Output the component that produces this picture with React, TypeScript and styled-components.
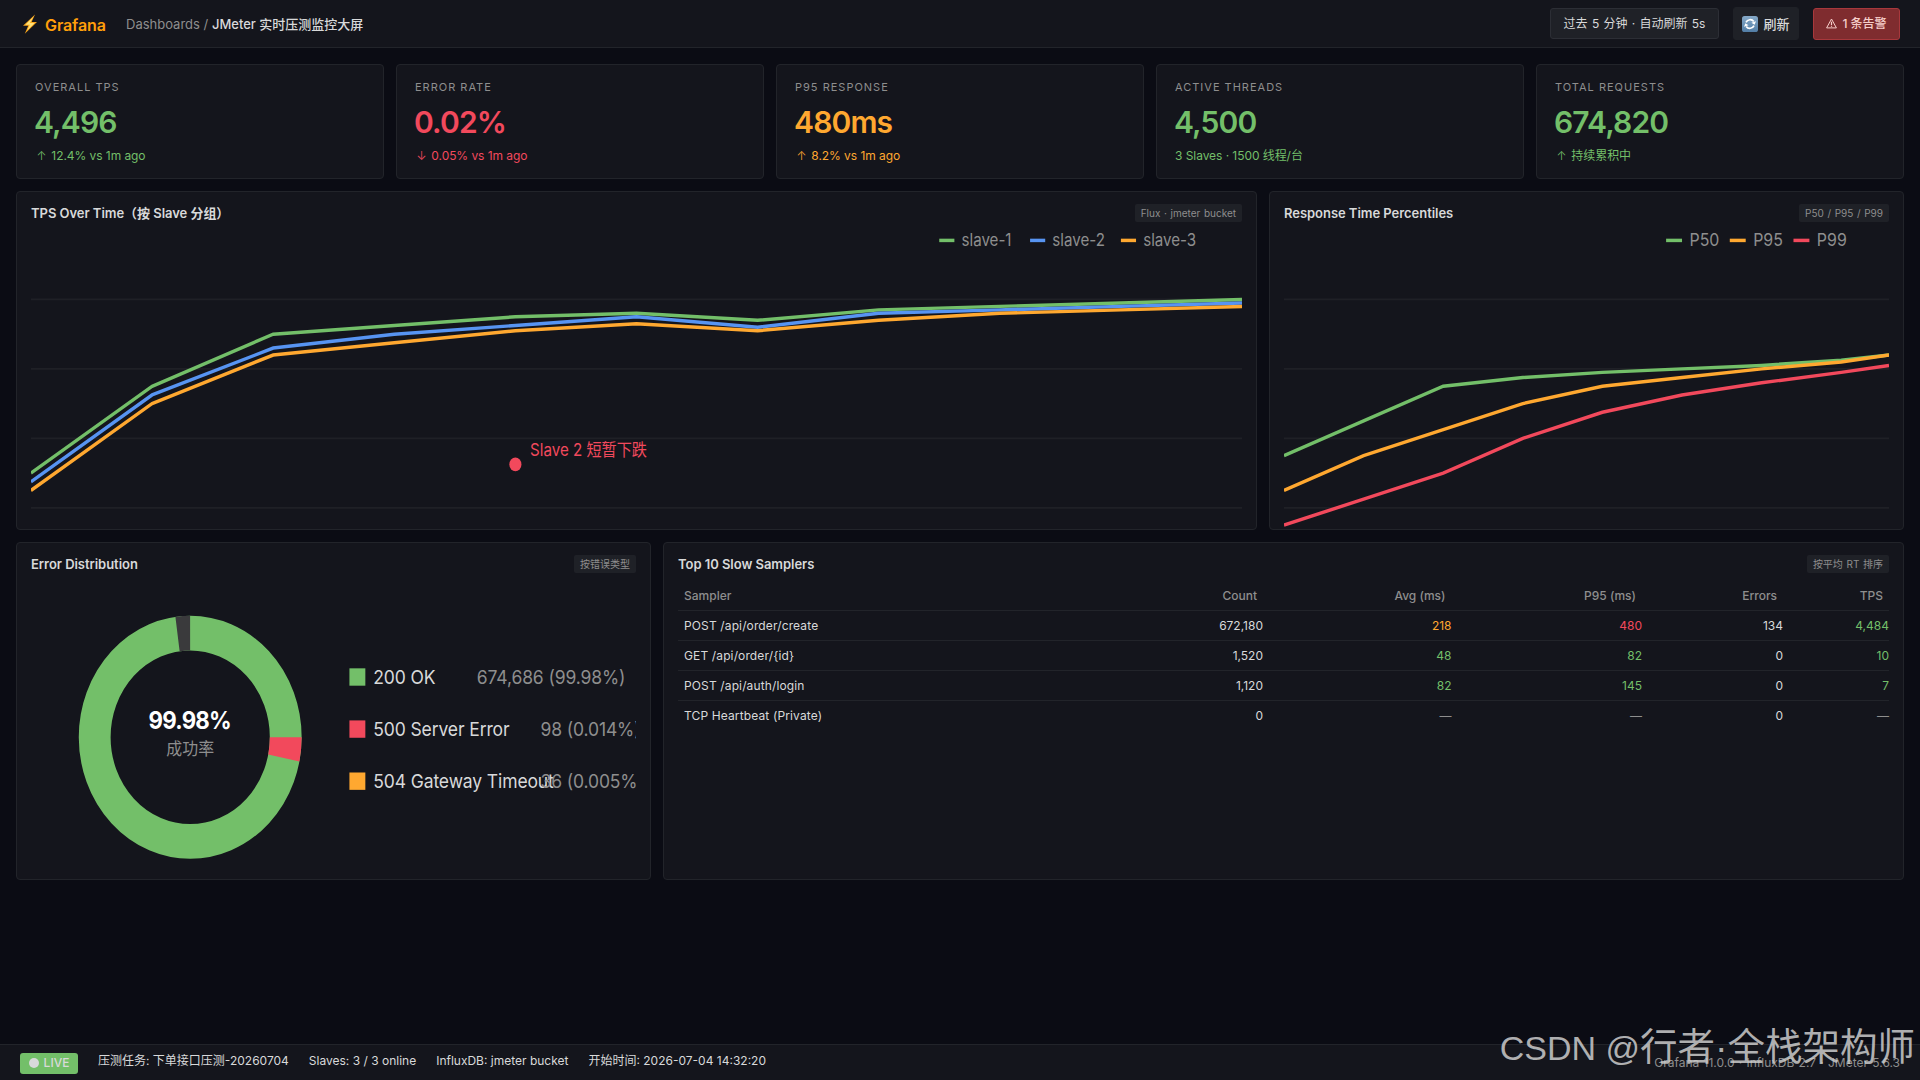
import React from "react";
import styled, { createGlobalStyle } from "styled-components";

const color = {
  page: "#0b0c14",
  panel: "#14151c",
  chip: "#1f2127",
  line: "#22242a",
  grid: "#1f2026",
  text: "#d8d9da",
  muted: "#8e8e8e",
  green: "#73bf69",
  red: "#f2495c",
  orange: "#ffa830",
  blue: "#5794f2",
};

type Tone = "green" | "red" | "orange" | "text" | "muted";

const GlobalStyle = createGlobalStyle`
  * { box-sizing: border-box; }
  body {
    margin: 0;
    background: ${color.page};
    color: ${color.text};
    font-family: Inter, "Noto Sans CJK SC", sans-serif;
    font-size: 12px;
  }
`;

const Screen = styled.div`
  width: 1920px;
  height: 1080px;
  display: flex;
  flex-direction: column;
  overflow: hidden;
  position: relative;
`;

const Header = styled.header`
  height: 48px;
  flex: none;
  display: flex;
  align-items: center;
  padding: 0 20px;
  background: ${color.panel};
  border-bottom: 1px solid ${color.line};
`;

const Brand = styled.div`
  display: flex;
  align-items: center;
  gap: 6px;
  width: 106px;
  padding-left: 1px;
  color: #ff9f0a;
  font-size: 16px;
  font-weight: 600;
  line-height: 20px;
  padding-top: 2px;
  letter-spacing: -0.1px;
  svg { margin-top: -2px; }
`;

const Crumbs = styled.div`
  color: ${color.muted};
  font-size: 13px;
  line-height: 20px;
  b { color: ${color.text}; font-weight: 500; }
`;

const Actions = styled.div`
  margin-left: auto;
  display: flex;
  align-items: center;
  gap: 14px;
`;

const Action = styled.div<{ $w: number; $h: number; $kind?: "outline" | "alert" }>`
  width: ${(p) => p.$w}px;
  height: ${(p) => p.$h}px;
  display: flex;
  align-items: center;
  justify-content: center;
  gap: 5px;
  white-space: nowrap;
  border-radius: 3px;
  line-height: 18px;
  background: ${(p) => (p.$kind === "alert" ? "#7f2c2f" : color.chip)};
  border: 1px solid ${(p) => (p.$kind === "alert" ? "#a8383c" : p.$kind ? "#2c2e35" : color.chip)};
  color: ${(p) => (p.$kind === "alert" ? "#f6cfcb" : color.text)};
  font-size: ${(p) => (p.$kind ? 12 : 13)}px;
  font-weight: ${(p) => (p.$kind === "outline" ? 400 : 500)};
  word-spacing: ${(p) => (p.$kind === "outline" ? 0.9 : 0)}px;
`;

const Main = styled.main`
  flex: 1;
  padding: 16px;
  display: grid;
  grid-template-rows: 115px 338.5px 338.5px;
  gap: 12px;
`;

const KpiRow = styled.section`
  display: grid;
  grid-template-columns: repeat(5, 1fr);
  gap: 12px;
`;

const PanelRow = styled.section<{ $columns: string }>`
  display: grid;
  grid-template-columns: ${(p) => p.$columns};
  gap: 12px;
  min-height: 0;
`;

const Card = styled.article`
  background: ${color.panel};
  border: 1px solid ${color.line};
  border-radius: 4px;
  overflow: hidden;
  min-width: 0;
`;

const KpiCard = styled(Card)`
  padding: 14px 18px;
  display: flex;
  flex-direction: column;
`;

const KpiLabel = styled.div`
  color: ${color.muted};
  font-size: 11px;
  line-height: 16px;
  letter-spacing: 1px;
  white-space: nowrap;
`;

const KpiValue = styled.div<{ $tone: Tone }>`
  color: ${(p) => color[p.$tone]};
  font-size: 30px;
  font-weight: 600;
  line-height: 36px;
  letter-spacing: -0.85px;
  margin: 9px 0 0 -1px;
`;

const KpiNote = styled.div<{ $tone: Tone }>`
  color: ${(p) => color[p.$tone]};
  font-size: 12px;
  line-height: 18px;
  letter-spacing: -0.06px;
  margin-top: 7px;
`;

const Arrow = styled.span`
  display: inline-block;
  width: 13px;
  text-align: center;
  font-weight: 300;
`;

const Panel = styled(Card)`
  padding: 12px 14px;
`;

const PanelHead = styled.div`
  display: flex;
  justify-content: space-between;
  align-items: center;
  height: 18px;
  margin-bottom: 8px;
`;

const PanelTitle = styled.h2`
  margin: 0;
  font-size: 13px;
  font-weight: 600;
  line-height: 18px;
  letter-spacing: -0.04px;
`;

const Tag = styled.span`
  height: 18px;
  padding: 0 6px;
  border-radius: 2px;
  background: ${color.chip};
  color: ${color.muted};
  font-size: 10px;
  line-height: 18px;
  word-spacing: 0.8px;
  white-space: nowrap;
`;

const Chart = styled.svg`
  display: block;
  width: 100%;
  height: 100%;
  overflow: hidden;
`;

const SamplerTable = styled.div`
  display: flex;
  flex-direction: column;
`;

const SamplerRow = styled.div<{ $head?: boolean }>`
  display: grid;
  grid-template-columns: 585px 188.5px 190.5px 141px 1fr;
  height: 30px;
  padding-top: 2px;
  align-items: center;
  border-bottom: 1px solid ${color.line};
  color: ${(p) => (p.$head ? color.muted : color.text)};
  font-weight: ${(p) => (p.$head ? 500 : 400)};
  line-height: 18px;
  &:last-child { border-bottom-color: transparent; }
`;

const NameCell = styled.div<{ $head?: boolean }>`
  display: flex;
  justify-content: space-between;
  padding: 0 ${(p) => (p.$head ? 6 : 0)}px 0 6px;
  span:first-child { letter-spacing: ${(p) => (p.$head ? 0 : 0.13)}px; }
`;

const Cell = styled.div<{ $tone?: Tone; $head?: boolean }>`
  text-align: right;
  padding-right: ${(p) => (p.$head ? 6 : 0)}px;
  color: ${(p) => (p.$tone ? color[p.$tone] : "inherit")};
`;

const Footer = styled.footer`
  height: 36px;
  flex: none;
  display: flex;
  align-items: center;
  gap: 20px;
  padding: 0 20px;
  background: ${color.panel};
  border-top: 1px solid ${color.line};
  line-height: 18px;
`;

const Live = styled.div`
  width: 58px;
  height: 21px;
  margin-top: 1px;
  display: flex;
  align-items: center;
  justify-content: center;
  gap: 5px;
  border-radius: 3px;
  background: ${color.green};
  font-weight: 500;
`;

const Dot = styled.i`
  width: 10px;
  height: 10px;
  border-radius: 50%;
  background: ${color.text};
`;

const FooterItem = styled.span`
  margin-top: -4px;
  white-space: nowrap;
`;

const Versions = styled.span`
  margin-left: auto;
  margin-top: 1px;
  color: ${color.muted};
  word-spacing: 0.9px;
  white-space: nowrap;
`;

const Watermark = styled.div`
  position: absolute;
  right: 5px;
  bottom: 8px;
  color: rgba(205, 205, 205, 0.85);
  font-family: "Liberation Sans", "Noto Sans CJK SC", sans-serif;
  font-size: 37.5px;
  font-weight: 400;
  line-height: 48px;
  white-space: nowrap;
  span { font-size: 34px; }
`;

const kpis: { label: string; value: string; arrow?: string; note: string; tone: Tone }[] = [
  { label: "OVERALL TPS", value: "4,496", arrow: "↑", note: "12.4% vs 1m ago", tone: "green" },
  { label: "ERROR RATE", value: "0.02%", arrow: "↓", note: "0.05% vs 1m ago", tone: "red" },
  { label: "P95 RESPONSE", value: "480ms", arrow: "↑", note: "8.2% vs 1m ago", tone: "orange" },
  { label: "ACTIVE THREADS", value: "4,500", note: "3 Slaves · 1500 线程/台", tone: "green" },
  { label: "TOTAL REQUESTS", value: "674,820", arrow: "↑", note: "持续累积中", tone: "green" },
];

const samplers: { name: string; count: string; cells: [string, Tone][] }[] = [
  { name: "POST /api/order/create", count: "672,180", cells: [["218", "orange"], ["480", "red"], ["134", "text"], ["4,484", "green"]] },
  { name: "GET /api/order/{id}", count: "1,520", cells: [["48", "green"], ["82", "green"], ["0", "text"], ["10", "green"]] },
  { name: "POST /api/auth/login", count: "1,120", cells: [["82", "green"], ["145", "green"], ["0", "text"], ["7", "green"]] },
  { name: "TCP Heartbeat (Private)", count: "0", cells: [["—", "muted"], ["—", "muted"], ["0", "text"], ["—", "muted"]] },
];

const tpsX = [0, 80, 160, 240, 320, 400, 480, 560, 640, 720, 800];
const rtX = [0, 50, 100, 150, 200, 250, 300, 350, 380];

const points = (xs: number[], ys: number[]) => xs.map((x, i) => `${x},${ys[i]}`).join(" ");

function Series({ xs, ys, stroke }: { xs: number[]; ys: number[]; stroke: string }) {
  return <polyline points={points(xs, ys)} fill="none" stroke={stroke} strokeWidth={2} />;
}

function GridLines({ width }: { width: number }) {
  return (
    <>
      {[40, 80, 120, 160].map((y) => (
        <line key={y} x1={0} x2={width} y1={y} y2={y} stroke={color.grid} strokeWidth={1} />
      ))}
    </>
  );
}

function Legend({ x, fill, label }: { x: number; fill: string; label: string }) {
  return (
    <>
      <rect x={x} y={5} width={10} height={2} fill={fill} />
      <text x={x + 14.7} y={9} fontSize={10} fill={color.muted}>{label}</text>
    </>
  );
}

function TpsChart() {
  return (
    <Chart viewBox="0 0 800 180" preserveAspectRatio="none">
      <GridLines width={800} />
      <Series xs={tpsX} ys={[140, 90, 60, 55, 50, 48, 52, 46, 44, 42, 40]} stroke={color.green} />
      <Series xs={tpsX} ys={[145, 95, 68, 60, 55, 50, 56, 48, 46, 44, 42]} stroke={color.blue} />
      <Series xs={tpsX} ys={[150, 100, 72, 65, 58, 54, 58, 52, 48, 46, 44]} stroke={color.orange} />
      <circle cx={320} cy={135} r={4} fill={color.red} />
      <text x={329.7} y={130} fontSize={10} fill={color.red}>Slave 2 短暂下跌</text>
      <Legend x={600} fill={color.green} label="slave-1" />
      <Legend x={660} fill={color.blue} label="slave-2" />
      <Legend x={720} fill={color.orange} label="slave-3" />
    </Chart>
  );
}

function PercentileChart() {
  return (
    <Chart viewBox="0 0 380 180" preserveAspectRatio="none">
      <GridLines width={380} />
      <Series xs={rtX} ys={[130, 110, 90, 85, 82, 80, 78, 75, 72]} stroke={color.green} />
      <Series xs={rtX} ys={[150, 130, 115, 100, 90, 85, 80, 76, 72]} stroke={color.orange} />
      <Series xs={rtX} ys={[170, 155, 140, 120, 105, 95, 88, 82, 78]} stroke={color.red} />
      <Legend x={240} fill={color.green} label="P50" />
      <Legend x={280} fill={color.orange} label="P95" />
      <Legend x={320} fill={color.red} label="P99" />
    </Chart>
  );
}

function ErrorChart() {
  const legend = [
    { y: 50.3, fill: color.green, name: "200 OK", value: "674,686 (99.98%)", vx: 280 },
    { y: 80.3, fill: color.red, name: "500 Server Error", value: "98 (0.014%)", vx: 320 },
    { y: 110.3, fill: color.orange, name: "504 Gateway Timeout", value: "36 (0.005%)", vx: 320 },
  ];
  return (
    <Chart viewBox="0 0 380 180" preserveAspectRatio="none">
      <circle cx={100} cy={90} r={60} fill="none" stroke={color.green} strokeWidth={20} />
      <circle cx={100} cy={90} r={60} fill="none" stroke={color.red} strokeWidth={20} strokeDasharray="12 365" />
      <circle cx={100} cy={90} r={60} fill="none" stroke="#3a3a3c" strokeWidth={20} strokeDasharray="8 369" transform="rotate(-97.64 100 90)" />
      <text x={99.7} y={85} fontSize={14} fontWeight={700} fill="#fff" textAnchor="middle" letterSpacing={-0.5}>99.98%</text>
      <text x={100} y={100.5} fontSize={10} fill={color.muted} textAnchor="middle">成功率</text>
      {legend.map((l) => (
        <g key={l.name} fontSize={11} letterSpacing={-0.07}>
          <rect x={200} y={l.y} width={10} height={10} fill={l.fill} />
          <text x={215} y={l.y + 8.9} fill={color.text}>{l.name}</text>
          <text x={l.vx} y={l.y + 8.9} fill={color.muted}>{l.value}</text>
        </g>
      ))}
    </Chart>
  );
}

function BoltIcon() {
  return (
    <svg width="18" height="20" viewBox="0 0 18 20">
      <path d="M14 .4 2 11.8h5.2L3.8 19.8 16 8h-5.4z" fill="#f9a51b" />
      <path d="M12.4 2.8 4.4 10.8h4.4L6 16.8 13.6 9H8.9z" fill="#ffe27a" />
    </svg>
  );
}

function RefreshIcon() {
  return (
    <svg width="16" height="16" viewBox="0 0 16 16">
      <defs>
        <linearGradient id="refresh-tile" x1="0" y1="0" x2="0" y2="1">
          <stop offset="0" stopColor="#86a9c8" />
          <stop offset="1" stopColor="#527ea6" />
        </linearGradient>
      </defs>
      <rect width="16" height="16" rx="2.6" fill="url(#refresh-tile)" />
      <path d="M4 6.4A4.5 4.5 0 0 1 11.8 5.6" fill="none" stroke="#fff" strokeWidth="1.7" />
      <path d="M12 9.6A4.5 4.5 0 0 1 4.2 10.4" fill="none" stroke="#fff" strokeWidth="1.7" />
      <path d="M14 5.2 12.6 8.8 9.4 6.8zM2 10.8 3.4 7.2 6.6 9.2z" fill="#fff" />
    </svg>
  );
}

function WarningIcon() {
  return (
    <svg width="11" height="11" viewBox="0 0 11 11" fill="none" stroke="currentColor" strokeWidth="1">
      <path d="M5.5 1 10.4 9.9H.6z" strokeLinejoin="round" />
      <path d="M5.5 3.8v3.1M5.5 7.7v1.1" strokeWidth="1.2" />
    </svg>
  );
}

function PanelHeader({ title, tag }: { title: string; tag: string }) {
  return (
    <PanelHead>
      <PanelTitle>{title}</PanelTitle>
      <Tag>{tag}</Tag>
    </PanelHead>
  );
}

export default function App() {
  return (
    <Screen>
      <GlobalStyle />
      <Header>
        <Brand><BoltIcon />Grafana</Brand>
        <Crumbs>Dashboards / <b>JMeter 实时压测监控大屏</b></Crumbs>
        <Actions>
          <Action $w={169} $h={31} $kind="outline">过去 5 分钟 · 自动刷新 5s</Action>
          <Action $w={66} $h={33}><RefreshIcon />刷新</Action>
          <Action $w={87} $h={32} $kind="alert"><WarningIcon />1 条告警</Action>
        </Actions>
      </Header>
      <Main>
        <KpiRow>
          {kpis.map((k) => (
            <KpiCard key={k.label}>
              <KpiLabel>{k.label}</KpiLabel>
              <KpiValue $tone={k.tone}>{k.value}</KpiValue>
              <KpiNote $tone={k.tone}>
                {k.arrow && <><Arrow>{k.arrow}</Arrow>{" "}</>}
                {k.note}
              </KpiNote>
            </KpiCard>
          ))}
        </KpiRow>
        <PanelRow $columns="1fr 635px">
          <Panel>
            <PanelHeader title="TPS Over Time（按 Slave 分组）" tag="Flux · jmeter bucket" />
            <TpsChart />
          </Panel>
          <Panel>
            <PanelHeader title="Response Time Percentiles" tag="P50 / P95 / P99" />
            <PercentileChart />
          </Panel>
        </PanelRow>
        <PanelRow $columns="635px 1fr">
          <Panel>
            <PanelHeader title="Error Distribution" tag="按错误类型" />
            <ErrorChart />
          </Panel>
          <Panel>
            <PanelHeader title="Top 10 Slow Samplers" tag="按平均 RT 排序" />
            <SamplerTable>
              <SamplerRow $head>
                <NameCell $head><span>Sampler</span><span>Count</span></NameCell>
                {["Avg (ms)", "P95 (ms)", "Errors", "TPS"].map((h) => <Cell key={h} $head>{h}</Cell>)}
              </SamplerRow>
              {samplers.map((s) => (
                <SamplerRow key={s.name}>
                  <NameCell><span>{s.name}</span><span>{s.count}</span></NameCell>
                  {s.cells.map(([value, tone], i) => <Cell key={i} $tone={tone}>{value}</Cell>)}
                </SamplerRow>
              ))}
            </SamplerTable>
          </Panel>
        </PanelRow>
      </Main>
      <Footer>
        <Live><Dot />LIVE</Live>
        <FooterItem>压测任务: 下单接口压测-20260704</FooterItem>
        <FooterItem>Slaves: 3 / 3 online</FooterItem>
        <FooterItem>InfluxDB: jmeter bucket</FooterItem>
        <FooterItem>开始时间: 2026-07-04 14:32:20</FooterItem>
        <Versions>Grafana 11.0.0 · InfluxDB 2.7 · JMeter 5.6.3</Versions>
      </Footer>
      <Watermark><span>CSDN @</span>行者·全栈架构师</Watermark>
    </Screen>
  );
}
